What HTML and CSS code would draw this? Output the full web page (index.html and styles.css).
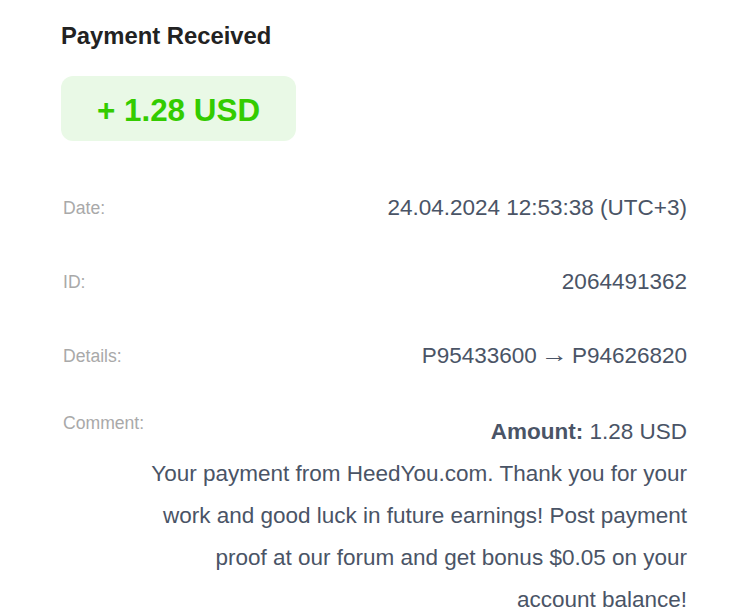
FILE: index.html
```html
<!DOCTYPE html>
<html>
<head>
<meta charset="utf-8">
<link rel="stylesheet" href="styles.css">
</head>
<body>
<div class="card">
  <h1 class="title">Payment Received</h1>
  <div class="badge">+ 1.28 USD</div>
  <div class="rows">
    <div class="row">
      <div class="label">Date:</div>
      <div class="value">24.04.2024 12:53:38 (UTC+3)</div>
    </div>
    <div class="row">
      <div class="label">ID:</div>
      <div class="value">2064491362</div>
    </div>
    <div class="row">
      <div class="label">Details:</div>
      <div class="value">P95433600 <span class="arrow">→</span> P94626820</div>
    </div>
    <div class="row row-top">
      <div class="label">Comment:</div>
      <div class="value comment"><b>Amount:</b> 1.28 USD<br>Your payment from HeedYou.com. Thank you for your work and good luck in future earnings! Post payment proof at our forum and get bonus $0.05 on your account balance!</div>
    </div>
  </div>
</div>
</body>
</html>
```
FILE: styles.css
```css
html, body {
  margin: 0;
  padding: 0;
  background: #ffffff;
}
body {
  font-family: "Liberation Sans", Arial, sans-serif;
}
.card {
  width: 626px;
  padding: 20px 0 0 61px;
}
.title {
  margin: 0;
  font-size: 23.8px;
  line-height: 32px;
  font-weight: bold;
  color: #222222;
}
.badge {
  margin-top: 24px;
  width: 235px;
  height: 65px;
  box-sizing: border-box;
  padding-top: 4px;
  border-radius: 12px;
  background: #e9f9e6;
  color: #33cc00;
  font-weight: bold;
  font-size: 31.4px;
  display: flex;
  align-items: center;
  justify-content: center;
}
.rows {
  margin-top: 46px;
  display: flex;
  flex-direction: column;
  gap: 32px;
}
.row {
  display: flex;
  align-items: center;
  justify-content: space-between;
}
.row-top {
  align-items: flex-start;
  margin-top: 2px;
}
.label {
  flex: none;
  padding-left: 2px;
  font-size: 17.6px;
  line-height: 24px;
  color: #a9a9a9;
}
.value {
  font-size: 22.5px;
  line-height: 42px;
  color: #4a5466;
  text-align: right;
}
.arrow {
  display: inline-block;
  transform: translateY(-1px) scaleX(1.22);
}
.comment {
  flex: 1;
  min-width: 0;
}
.comment b {
  font-weight: bold;
}
```
